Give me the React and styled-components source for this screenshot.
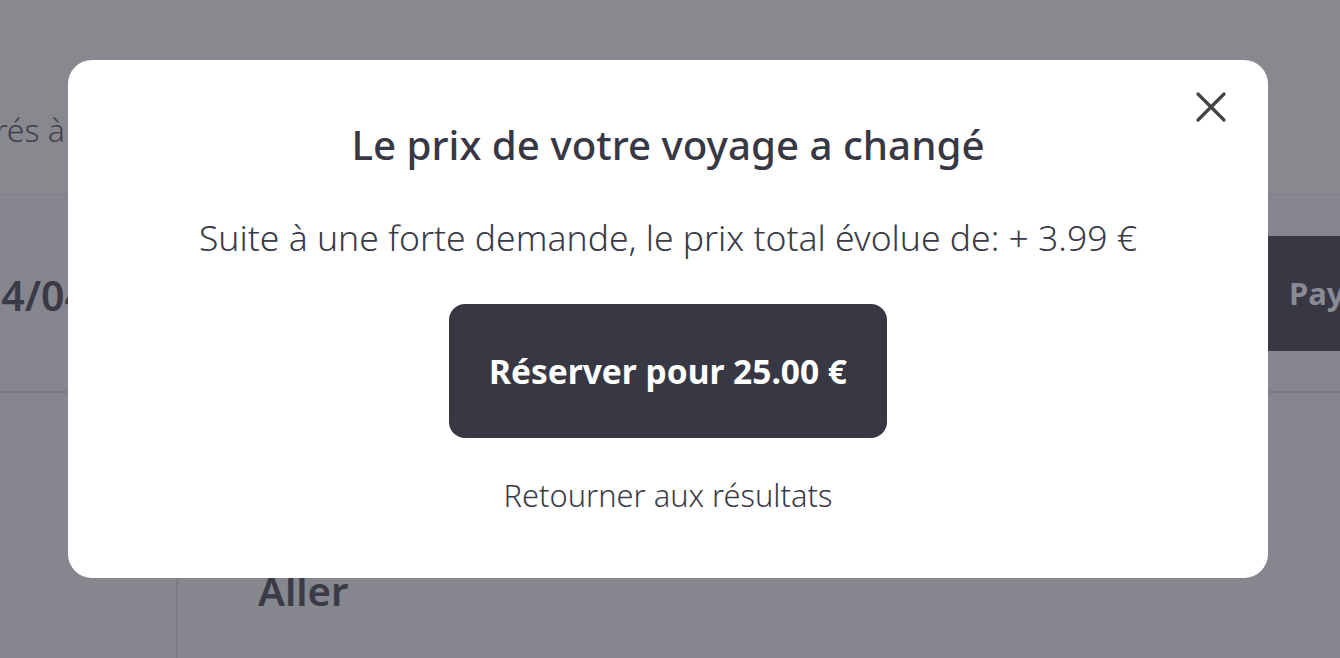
import React from "react";
import styled, { createGlobalStyle } from "styled-components";

const Global = createGlobalStyle`
  * { box-sizing: border-box; }
  html, body { margin: 0; padding: 0; }
  body {
    width: 1340px;
    height: 658px;
    overflow: hidden;
    font-family: "Noto Sans", "Open Sans", sans-serif;
    background: #86868e;
    color: #373844;
  }
`;

const Page = styled.div`
  width: 1340px;
  height: 658px;
  display: flex;
  flex-direction: column;
  overflow: hidden;
`;

const Header = styled.header`
  height: 195px;
  background: #88888f;
  border-bottom: 1px solid #808088;
  display: flex;
  align-items: center;
  padding-top: 64px;
`;

const ClipEnd = styled.div`
  width: ${(p) => p.$width}px;
  display: flex;
  justify-content: flex-end;
  overflow: hidden;
  white-space: nowrap;
`;

const SortLabel = styled.span`
  font-size: 32px;
  font-weight: 300;
  color: #3f404c;
`;

const Band = styled.section`
  height: 198px;
  background: #86868e;
  border-bottom: 2px solid #7a7a82;
  display: flex;
  align-items: center;
  justify-content: space-between;
`;

const DateText = styled.span`
  font-size: 41px;
  font-weight: 600;
  color: #3a3b47;
  margin-top: 4px;
`;

const PayButton = styled.div`
  width: 240px;
  height: 115px;
  margin-right: -168px;
  background: #373844;
  color: #898a93;
  font-size: 31px;
  font-weight: 700;
  display: flex;
  align-items: center;
  padding-left: 21px;
`;

const Body = styled.section`
  flex: 1;
  display: flex;
`;

const SideCol = styled.aside`
  width: 178px;
  border-right: 2px solid #7a7a82;
`;

const MainCol = styled.div`
  flex: 1;
  padding: 170px 0 0 80px;
`;

const Leg = styled.h2`
  margin: 0;
  font-size: 40px;
  font-weight: 600;
  color: #3a3b47;
`;

const Overlay = styled.div`
  position: fixed;
  inset: 0;
  padding: 60px 0 0 68px;
`;

const Modal = styled.div`
  position: relative;
  width: 1200px;
  height: 518px;
  background: #ffffff;
  border-radius: 24px;
  display: flex;
  flex-direction: column;
  align-items: center;
  padding-top: 58px;
`;

const CloseButton = styled.button`
  position: absolute;
  top: 30px;
  right: 40px;
  width: 34px;
  height: 34px;
  padding: 0;
  border: 0;
  background: none;
  display: flex;
  align-items: center;
  justify-content: center;
  cursor: pointer;
`;

const Title = styled.h1`
  margin: 0;
  font-size: 40.3px;
  line-height: 54px;
  font-weight: 530;
  color: #373844;
`;

const Message = styled.p`
  margin: 43px 0 0;
  font-size: 35.5px;
  line-height: 44px;
  font-weight: 300;
  color: #3a3b47;
`;

const PrimaryButton = styled.button`
  margin-top: 45px;
  width: 438px;
  height: 134px;
  border: 0;
  border-radius: 16px;
  background: #373844;
  color: #ffffff;
  font-family: inherit;
  font-size: 33.5px;
  font-weight: 700;
  cursor: pointer;
`;

const TextLink = styled.button`
  margin-top: 35px;
  border: 0;
  background: none;
  padding: 0;
  font-family: inherit;
  font-size: 30.8px;
  line-height: 44px;
  font-weight: 300;
  color: #3a3b47;
  cursor: pointer;
`;

export default function App() {
  return (
    <>
      <Global />
      <Page>
        <Header>
          <ClipEnd $width={65}>
            <SortLabel>Trajets filtrés à</SortLabel>
          </ClipEnd>
        </Header>
        <Band>
          <ClipEnd $width={88}>
            <DateText>14/04</DateText>
          </ClipEnd>
          <PayButton>Payer</PayButton>
        </Band>
        <Body>
          <SideCol />
          <MainCol>
            <Leg>Aller</Leg>
          </MainCol>
        </Body>
      </Page>
      <Overlay>
        <Modal role="dialog" aria-modal="true">
          <CloseButton aria-label="Fermer">
            <svg width="32" height="32" viewBox="0 0 32 32">
              <path d="M3 3 L29 29 M29 3 L3 29" stroke="#444444" strokeWidth="3.2" strokeLinecap="round" />
            </svg>
          </CloseButton>
          <Title>Le prix de votre voyage a changé</Title>
          <Message>Suite à une forte demande, le prix total évolue de: + 3.99 €</Message>
          <PrimaryButton>Réserver pour 25.00 €</PrimaryButton>
          <TextLink>Retourner aux résultats</TextLink>
        </Modal>
      </Overlay>
    </>
  );
}
